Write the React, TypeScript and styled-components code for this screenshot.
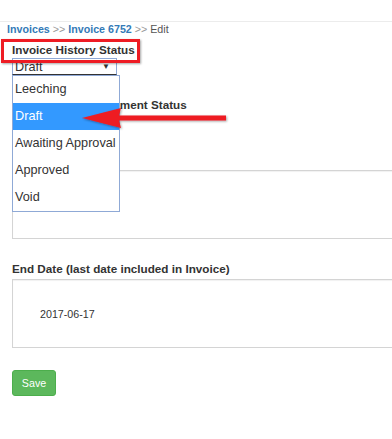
import styled, { createGlobalStyle } from "styled-components";

const GlobalStyle = createGlobalStyle`
    html, body {
        margin: 0;
        padding: 0;
        background: #fff;
        overflow: hidden;
    }
    body {
        font-family: "Liberation Sans", Arial, sans-serif;
        color: #333;
    }
`

const Page = styled.div`
    position: relative;
    width: 392px;
    height: 439px;
    overflow: hidden;
`

const TopBar = styled.div`
    height: 21px;
    border-bottom: 1px solid #ececec;
`

const Breadcrumb = styled.div`
    padding-left: 7px;
    font-size: 10.7px;
    line-height: 14px;
    color: #999;

    a {
        color: #337ab7;
        font-weight: bold;
        text-decoration: none;
    }

    .current {
        color: #555;
    }
`

const Form = styled.form`
    padding-left: 12px;
`

const Label = styled.div<{ top: number }>`
    margin-top: ${props => props.top}px;
    font-size: 11.7px;
    line-height: 14px;
    font-weight: bold;
    color: #333;
    white-space: nowrap;
`

const SelectBox = styled.div`
    margin-top: 1px;
    box-sizing: border-box;
    width: 105px;
    height: 17px;
    border: 1px solid #8fa9d6;
    border-bottom-color: #333;
    display: flex;
    align-items: center;
    justify-content: space-between;
    padding: 0 6px 0 2px;
    font-size: 12.7px;
    color: #333;
    overflow: hidden;

    span.caret {
        font-size: 8px;
    }
`

const Panel = styled.div<{ top: number }>`
    box-sizing: border-box;
    margin-top: ${props => props.top}px;
    width: 420px;
    height: 69px;
    border: 1px solid #d4d4d4;
    box-shadow: inset 0 1px 1px rgba(0, 0, 0, 0.06);
    display: flex;
    align-items: center;
    padding-left: 27px;
    font-size: 10.7px;
    color: #333;
`

const SaveButton = styled.button`
    margin-top: 22px;
    width: 44px;
    height: 26px;
    border: 1px solid #4cae4c;
    border-radius: 3px;
    background: #5cb85c;
    color: #fff;
    font-family: "Liberation Sans", Arial, sans-serif;
    font-size: 10.7px;
    padding: 0;
    display: block;
`

const OptionList = styled.ul`
    position: absolute;
    left: 12px;
    top: 75px;
    box-sizing: border-box;
    width: 108px;
    margin: 0;
    padding: 0;
    list-style: none;
    background: #fff;
    border: 1px solid #8fa9d6;
`

const Option = styled.li<{ selected?: boolean }>`
    height: 27px;
    line-height: 27px;
    padding-left: 2px;
    font-size: 12.7px;
    white-space: nowrap;
    color: ${props => props.selected ? '#fff' : '#333'};
    background: ${props => props.selected ? '#3399ff' : 'transparent'};
`

const HighlightBox = styled.div`
    position: absolute;
    left: 1px;
    top: 39px;
    width: 139px;
    height: 24px;
    box-sizing: border-box;
    border: 3px solid #ee1c24;
    box-shadow: 1px 1px 2px rgba(0, 0, 0, 0.35);
`

const Arrow = styled.svg`
    position: absolute;
    left: 80px;
    top: 106px;
`

const options = ['Leeching', 'Draft', 'Awaiting Approval', 'Approved', 'Void']

export default function App() {
    return (
        <Page>
            <GlobalStyle />
            <TopBar />
            <Breadcrumb>
                <a href="#">Invoices</a> &gt;&gt; <a href="#">Invoice 6752</a> &gt;&gt; <span className="current">Edit</span>
            </Breadcrumb>
            <Form onSubmit={e => e.preventDefault()}>
                <Label top={7}>Invoice History Status</Label>
                <SelectBox>
                    <span>Draft</span>
                    <span className="caret">▼</span>
                </SelectBox>
                <Label top={23}>Invoice History Payment Status</Label>
                <Panel top={58} />
                <Label top={23}>End Date (last date included in Invoice)</Label>
                <Panel top={3}>2017-06-17</Panel>
                <SaveButton type="submit">Save</SaveButton>
            </Form>

            <OptionList>
                {options.map(o => (
                    <Option key={o} selected={o === 'Draft'}>{o}</Option>
                ))}
            </OptionList>

            <HighlightBox />
            <Arrow width="152" height="26" viewBox="0 0 152 26">
                <defs>
                    <filter id="arrowShadow" x="-10%" y="-30%" width="120%" height="160%">
                        <feDropShadow dx="1" dy="1" stdDeviation="0.8" floodColor="#000" floodOpacity="0.35" />
                    </filter>
                </defs>
                <path
                    d="M2 12 L41 2 L39 9.5 L146 9.5 L146 14.5 L39 14.5 L41 22 Z"
                    fill="#ee1c24"
                    filter="url(#arrowShadow)"
                />
            </Arrow>
        </Page>
    )
}
